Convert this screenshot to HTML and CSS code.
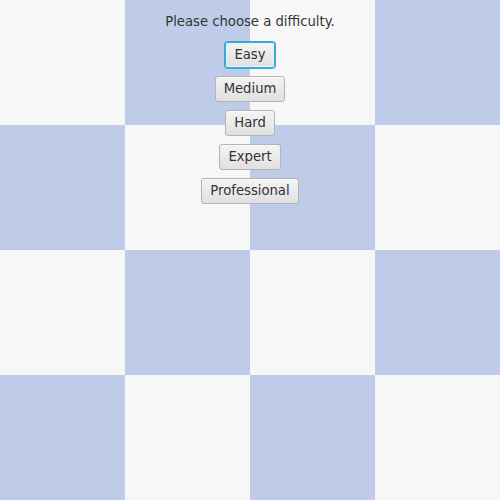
FILE: index.html
```html
<!DOCTYPE html>
<html>
<head>
<meta charset="utf-8">
<link rel="stylesheet" href="styles.css">
</head>
<body>
<div class="board">
  <div class="sq l"></div><div class="sq b"></div><div class="sq l"></div><div class="sq b"></div>
  <div class="sq b"></div><div class="sq l"></div><div class="sq b"></div><div class="sq l"></div>
  <div class="sq l"></div><div class="sq b"></div><div class="sq l"></div><div class="sq b"></div>
  <div class="sq b"></div><div class="sq l"></div><div class="sq b"></div><div class="sq l"></div>
</div>
<div class="menu">
  <div class="prompt">Please choose a difficulty.</div>
  <button class="btn focused">Easy</button>
  <button class="btn">Medium</button>
  <button class="btn">Hard</button>
  <button class="btn">Expert</button>
  <button class="btn">Professional</button>
</div>
</body>
</html>
```
FILE: styles.css
```css
html, body {
  margin: 0;
  padding: 0;
  width: 500px;
  height: 500px;
  overflow: hidden;
}
body {
  position: relative;
  font-family: "DejaVu Sans", sans-serif;
  font-size: 13px;
  color: #333;
}
.board {
  display: grid;
  grid-template-columns: repeat(4, 125px);
  grid-template-rows: repeat(4, 125px);
}
.sq.l { background: #f7f7f7; }
.sq.b { background: #bfcce9; }
.menu {
  position: absolute;
  top: 0;
  left: 0;
  width: 500px;
  display: flex;
  flex-direction: column;
  align-items: center;
  gap: 8px;
  padding-top: 13px;
}
.prompt {
  font-size: 13.2px;
  height: 18px;
  line-height: 18px;
  margin-bottom: 3px;
}
.btn {
  font-family: "DejaVu Sans", sans-serif;
  font-size: 13.2px;
  color: #333;
  height: 26px;
  padding: 0 8px;
  border: 1px solid #b3b3b3;
  border-radius: 3px;
  background: linear-gradient(#f4f4f4, #e0e0e0);
  box-shadow: inset 0 1px 0 #fbfbfb;
  line-height: 24px;
  margin: 0;
}
.btn.focused {
  border-color: #3aa9d9;
  box-shadow: 0 0 0 1px #3aa9d9, inset 0 0 0 1px #e8f4fa;
}
```
